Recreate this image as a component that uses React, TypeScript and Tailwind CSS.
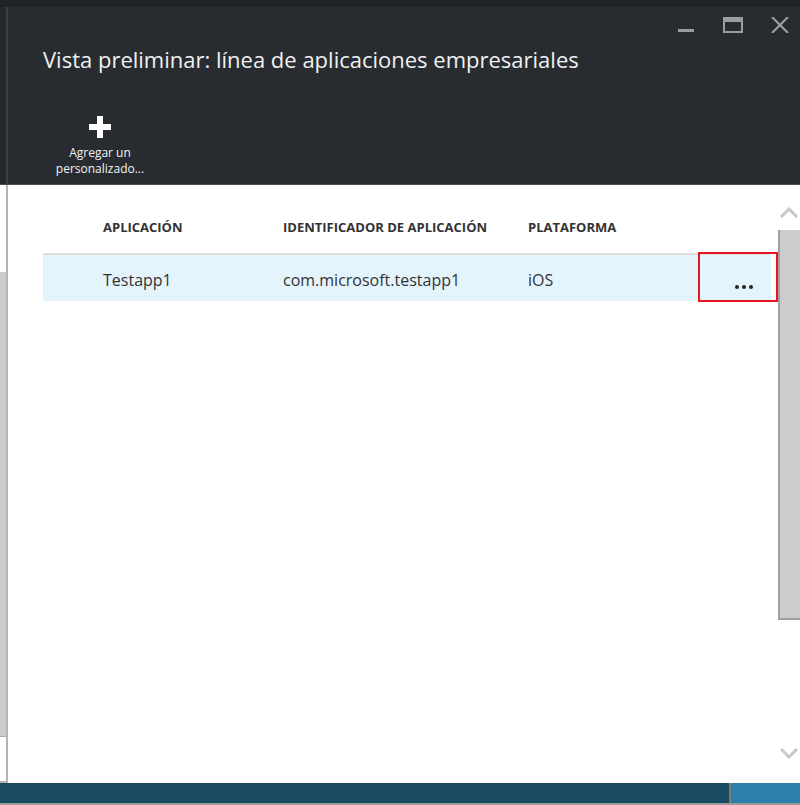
import React from 'react';

const font = { fontFamily: '"Open Sans", "Noto Sans", sans-serif' };

function WindowButtons() {
  return (
    <div className="flex items-start gap-[27px] pr-[10px] pt-[10px] text-[#9a9c9e]">
      <svg width="20" height="16" viewBox="0 0 20 16">
        <rect x="2" y="12" width="16" height="3" fill="currentColor" />
      </svg>
      <svg width="20" height="16" viewBox="0 0 20 16">
        <rect x="1" y="1" width="18" height="14" fill="none" stroke="currentColor" strokeWidth="2" />
        <rect x="1" y="1" width="18" height="4" fill="currentColor" />
      </svg>
      <svg width="20" height="16" viewBox="0 0 20 16">
        <path d="M2 0 L18 16 M18 0 L2 16" stroke="currentColor" strokeWidth="2.2" />
      </svg>
    </div>
  );
}

function Chevron({ up }: { up?: boolean }) {
  return (
    <svg width="18" height="11" viewBox="0 0 18 11">
      <path
        d={up ? 'M1 10 L9 2 L17 10' : 'M1 1 L9 9 L17 1'}
        fill="none"
        stroke="#c8c8c8"
        strokeWidth="3"
      />
    </svg>
  );
}

export default function App() {
  return (
    <div className="w-[800px] h-[805px] flex flex-col bg-white overflow-hidden" style={font}>
      {/* top strip */}
      <div className="h-[7px] bg-[#1f2226] shrink-0" />

      {/* header */}
      <div className="h-[178px] flex shrink-0 bg-[#282c30] border-b border-[#4b4f53]">
        <div className="w-[6px] bg-[#25292d]" />
        <div className="w-[2px] bg-[#3c4044]" />
        <div className="flex-1 flex flex-col">
          <div className="flex justify-between">
            <h1 className="pl-[35px] pt-[37px] text-[22px] leading-[30px] text-[#f0f0f0]">
              Vista preliminar: línea de aplicaciones empresariales
            </h1>
            <WindowButtons />
          </div>
          <div className="mt-[42px] ml-[47px] w-[90px] flex flex-col items-center text-white">
            <svg width="22" height="22" viewBox="0 0 22 22">
              <rect x="8" y="0" width="6" height="22" fill="white" />
              <rect x="0" y="8" width="22" height="6" fill="white" />
            </svg>
            <div className="mt-[7px] text-[12px] leading-[16px] text-center text-[#f2f2f2]">
              Agregar un
              <br />
              personalizado...
            </div>
          </div>
        </div>
      </div>

      {/* content */}
      <div className="flex-1 flex min-h-0">
        <div className="w-[6px] flex flex-col bg-white">
          <div className="h-[87px]" />
          <div className="h-[465px] bg-[#cccccc] border-b border-[#aaaaaa]" />
          <div className="flex-1" />
          <div className="h-[2px] bg-[#b0b0b0]" />
        </div>
        <div className="w-[2px] bg-[#b4b4b4]" />
        <div className="flex-1 flex">
          <div className="flex-1 pl-[35px] pt-[32px]">
            <div className="flex text-[13px] font-bold text-[#333] h-[38px] items-start pt-[1px] border-b-2 border-[#dedede]">
              <div className="w-[60px]" />
              <div className="w-[180px]">APLICACIÓN</div>
              <div className="w-[245px]">IDENTIFICADOR DE APLICACIÓN</div>
              <div className="w-[170px]">PLATAFORMA</div>
            </div>
            <div className="relative flex items-center h-[46px] pt-[3px] bg-[#e3f4fc] text-[16px] text-[#333] mr-[-1px]">
              <div className="w-[60px]" />
              <div className="w-[180px]">Testapp1</div>
              <div className="w-[245px]">com.microsoft.testapp1</div>
              <div className="w-[170px]">iOS</div>
              <div className="absolute right-[-7px] top-[-3px] w-[80px] h-[50px] border-2 border-[#e8141e] flex items-end justify-center pb-[11px] pl-[12px]">
                <span className="flex gap-[3px]">
                  <span className="w-[4px] h-[4px] rounded-full bg-[#222]" />
                  <span className="w-[4px] h-[4px] rounded-full bg-[#222]" />
                  <span className="w-[4px] h-[4px] rounded-full bg-[#222]" />
                </span>
              </div>
            </div>
          </div>
          {/* scrollbar */}
          <div className="w-[22px] ml-[8px] flex flex-col items-center">
            <div className="h-[22px]" />
            <Chevron up />
            <div className="h-[12px]" />
            <div className="w-[22px] h-[390px] bg-[#cccccc] border-l-2 border-b-2 border-[#a0a0a0]" />
            <div className="flex-1" />
            <Chevron />
            <div className="h-[24px]" />
          </div>
        </div>
      </div>

      {/* bottom bar */}
      <div className="h-[22px] flex shrink-0 border-b-2 border-[#9a9a9a]">
        <div className="flex-1 bg-[#1b4a63] border-r-2 border-[#7a7a7a]" />
        <div className="w-[69px] bg-[#2c7fab]" />
      </div>
    </div>
  );
}
